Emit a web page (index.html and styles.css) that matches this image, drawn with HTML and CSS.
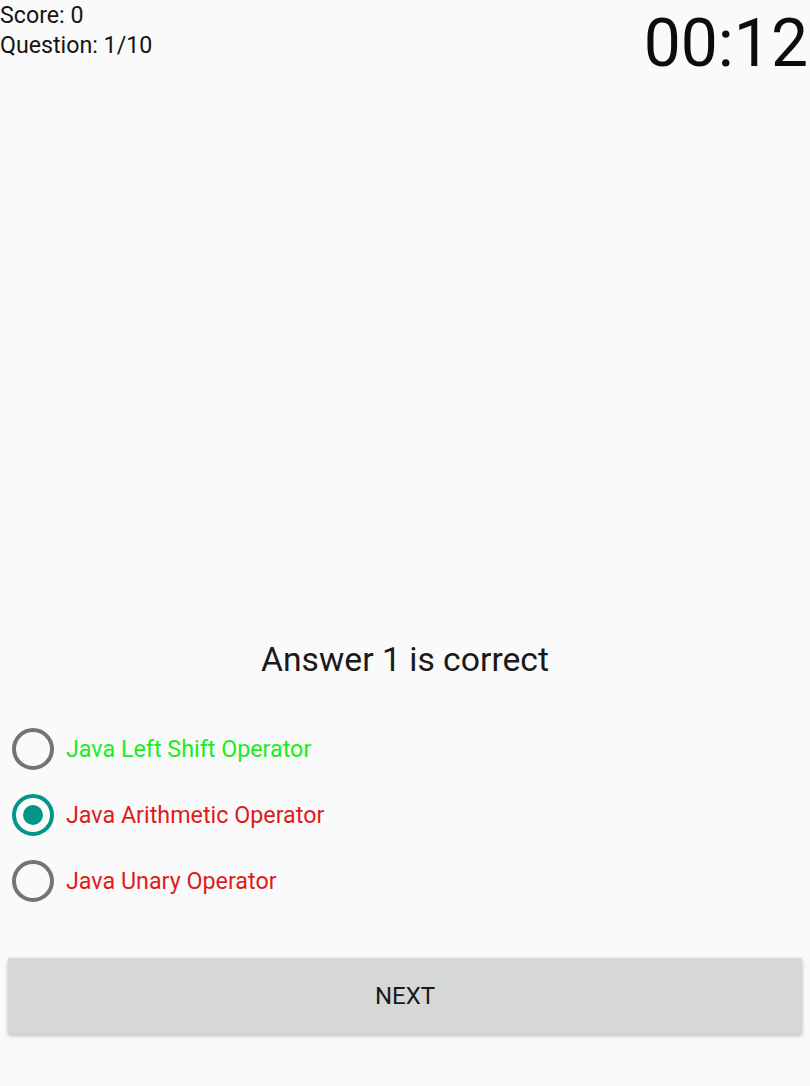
FILE: index.html
```html
<!DOCTYPE html>
<html>
<head>
<meta charset="utf-8">
<link rel="stylesheet" href="styles.css">
</head>
<body>
<div class="screen">
  <header class="top">
    <div class="stats">
      <div class="stat">Score: 0</div>
      <div class="stat">Question: 1/10</div>
    </div>
    <div class="timer">00:12</div>
  </header>
  <div class="question-area"></div>
  <div class="result">Answer 1 is correct</div>
  <div class="options">
    <label class="option">
      <span class="radio"></span>
      <span class="opt-text correct">Java Left Shift Operator</span>
    </label>
    <label class="option">
      <span class="radio checked"><span class="dot"></span></span>
      <span class="opt-text wrong">Java Arithmetic Operator</span>
    </label>
    <label class="option">
      <span class="radio"></span>
      <span class="opt-text wrong">Java Unary Operator</span>
    </label>
  </div>
  <div class="btn-wrap">
    <button class="next">NEXT</button>
  </div>
</div>
</body>
</html>
```

FILE: styles.css
```css
html, body {
  margin: 0;
  padding: 0;
  background: #fafafa;
}
body {
  font-family: Roboto, "Noto Sans", sans-serif;
  color: #111;
}
.screen {
  width: 810px;
  height: 1086px;
  display: flex;
  flex-direction: column;
}
.top {
  display: flex;
  justify-content: space-between;
  align-items: flex-start;
}
.stats {
  display: flex;
  flex-direction: column;
}
.stat {
  font-size: 23.2px;
  line-height: 30px;
  color: #151515;
}
.timer {
  font-size: 66px;
  line-height: 90px;
  margin-top: -1px;
  margin-right: 2px;
  color: #0c0c0c;
}
.question-area {
  height: 546px;
}
.result {
  text-align: center;
  font-size: 33.7px;
  line-height: 50px;
  color: #1a1a1a;
}
.options {
  display: flex;
  flex-direction: column;
  padding-top: 31px;
  padding-left: 12px;
}
.option {
  display: flex;
  align-items: center;
  height: 66px;
}
.radio {
  width: 34px;
  height: 34px;
  border: 4px solid #747474;
  border-radius: 50%;
  display: flex;
  align-items: center;
  justify-content: center;
  flex: none;
}
.radio.checked {
  border-color: #019688;
}
.dot {
  width: 20px;
  height: 20px;
  border-radius: 50%;
  background: #019688;
}
.opt-text {
  margin-left: 12px;
  font-size: 23.3px;
}
.correct { color: #1cec1c; }
.wrong { color: #e01a1a; }
.btn-wrap {
  padding: 0 8px;
  margin-top: 44px;
}
.next {
  width: 100%;
  height: 76px;
  border: none;
  border-radius: 2px;
  background: #d6d7d7;
  box-shadow: 0 2px 4px rgba(0,0,0,0.22), 0 0 2px rgba(0,0,0,0.08);
  font-family: Roboto, sans-serif;
  font-size: 24px;
  font-weight: 400;
  color: #1a1a1a;
  letter-spacing: 0;
}
```
